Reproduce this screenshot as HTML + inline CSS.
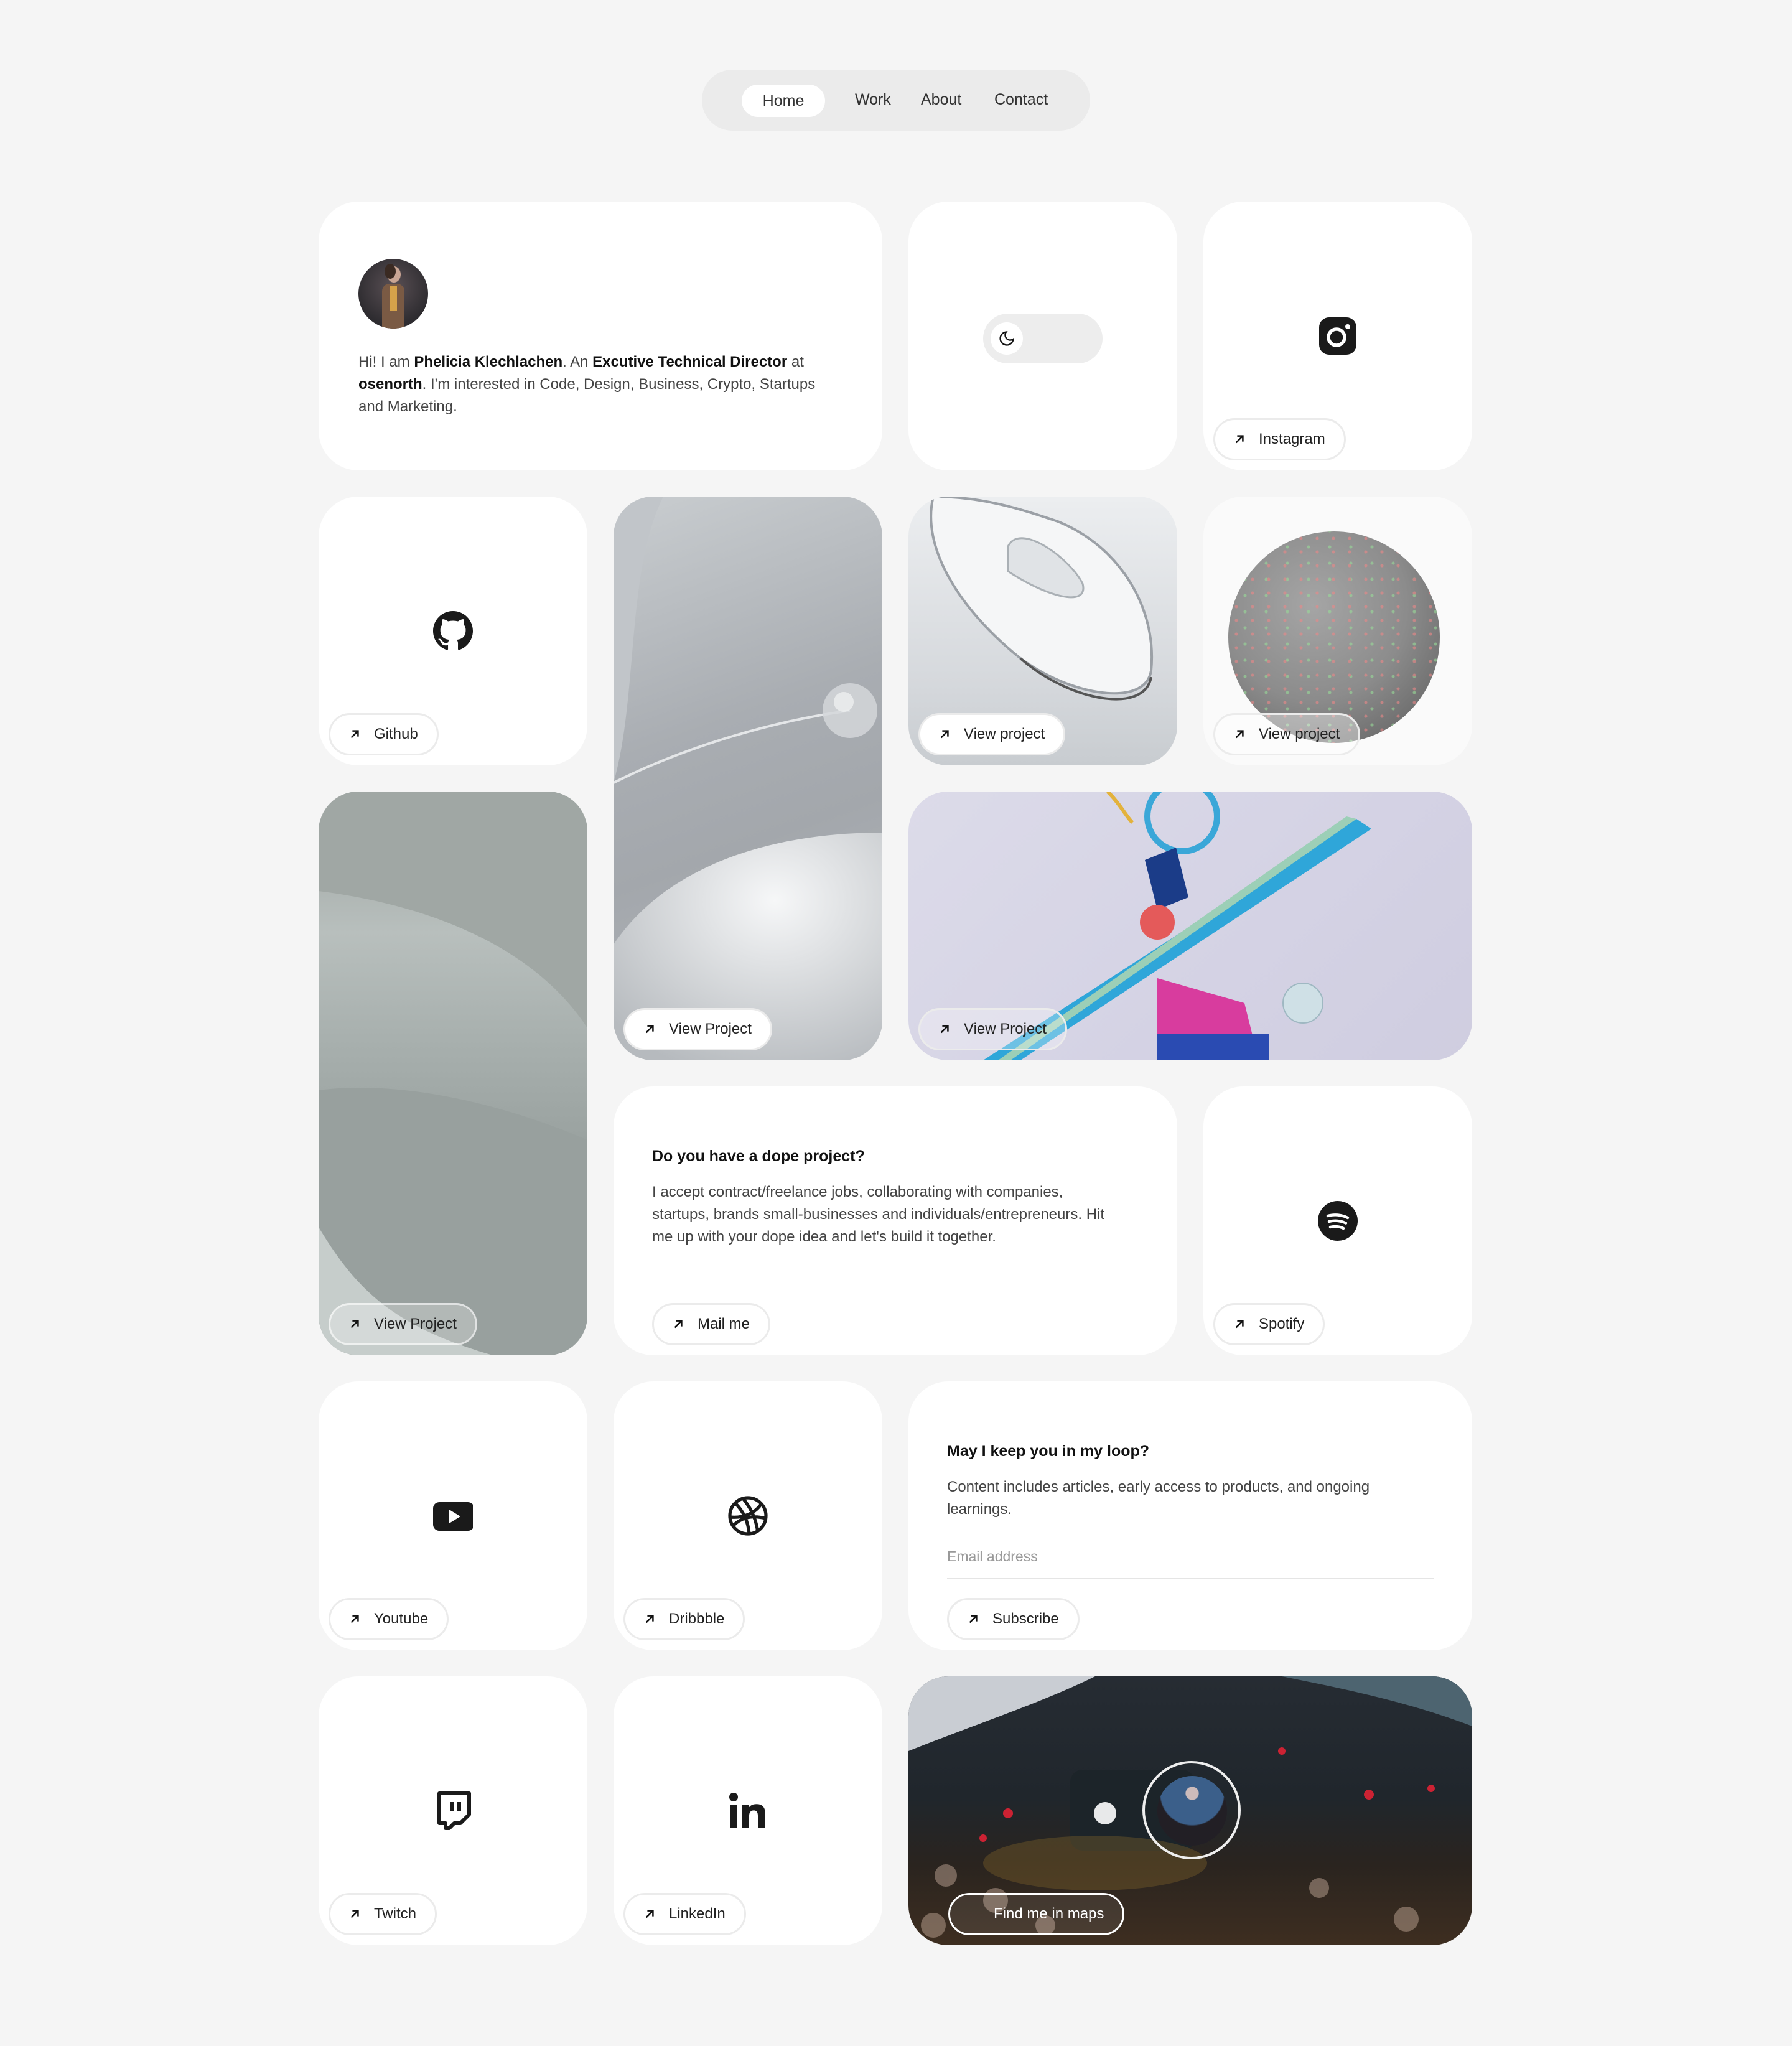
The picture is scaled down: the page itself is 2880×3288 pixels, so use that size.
<!DOCTYPE html>
<html><head><meta charset="utf-8">
<style>
html{zoom:2}
*{box-sizing:border-box;margin:0;padding:0}
body{width:1440px;height:1644px;background:#f5f5f5;font-family:"Liberation Sans",sans-serif;color:#111;position:relative;overflow:hidden}
.nav{position:absolute;left:564px;top:56px;width:312px;height:49px;background:#ebebeb;border-radius:25px}
.nav span{position:absolute;top:17px;font-size:12.5px;color:#333}
.nav .home{position:absolute;left:32px;top:12px;width:67px;height:26px;background:#fff;border-radius:13px;text-align:center;line-height:26px;color:#333;font-size:12.5px}
.card{position:absolute;width:216px;height:216px;background:#fff;border-radius:32px;overflow:hidden}
.c1{left:256px}.c2{left:493px}.c3{left:730px}.c4{left:967px}
.r1{top:162px}.r2{top:399px}.r3{top:636px}.r4{top:873px}.r5{top:1110px}.r6{top:1347px}
.w2{width:453px}.h2{height:453px}
.btn{position:absolute;left:8px;bottom:8px;height:34px;border:1.5px solid #ebebeb;border-radius:17px;background:#fff;font-size:12px;line-height:31px;padding:0 15px 0 35px;color:#222;white-space:nowrap}
.btn svg{position:absolute;left:15px;top:11px}
.btn.tr{background:rgba(255,255,255,.08);border-color:rgba(255,255,255,.55)}
.ico{position:absolute;left:92px;top:92px;width:32px;height:32px}
.txt{font-size:12px;line-height:18px;color:#444}
.txt b{font-weight:600;color:#111}
</style></head><body>
<div class="nav"><div class="home">Home</div><span style="left:123px">Work</span><span style="left:176px">About</span><span style="left:235px">Contact</span></div>

<div class="card c1 r1 w2">
 <div style="position:absolute;left:32px;top:46px;width:56px;height:56px;border-radius:50%;background:radial-gradient(circle at 50% 40%,#5a5055,#2e2c30 70%);overflow:hidden">
  <div style="position:absolute;left:23px;top:6px;width:11px;height:13px;border-radius:50%;background:#c9a594"></div>
  <div style="position:absolute;left:21px;top:4px;width:9px;height:12px;border-radius:50%;background:#3a2a22"></div>
  <div style="position:absolute;left:19px;top:20px;width:18px;height:36px;border-radius:6px 6px 0 0;background:#7a5a44"></div>
  <div style="position:absolute;left:25px;top:22px;width:6px;height:20px;background:#d6a24a"></div>
 </div>
 <p class="txt" style="position:absolute;left:32px;top:120px;width:380px">Hi! I am <b>Phelicia Klechlachen</b>. An <b>Excutive Technical Director</b> at <b>osenorth</b>. I'm interested in Code, Design, Business, Crypto, Startups and Marketing.</p>
</div>
<div class="card c3 r1"><div style="position:absolute;left:60px;top:90px;width:96px;height:40px;border-radius:20px;background:#ededed"><div style="position:absolute;left:6px;top:7px;width:26px;height:26px;border-radius:50%;background:#fff"></div><svg style="position:absolute;left:12px;top:13px" width="14" height="14" viewBox="0 0 24 24" fill="none" stroke="#111" stroke-width="2"><path d="M21 12.8A9 9 0 1 1 11.2 3a7 7 0 0 0 9.8 9.8z"/></svg></div></div>
<div class="card c4 r1"><svg class="ico" viewBox="0 0 32 32"><rect x="1" y="1" width="30" height="30" rx="8" fill="#1a1a1a"/><circle cx="15" cy="17" r="6.5" fill="none" stroke="#fff" stroke-width="2.8"/><circle cx="24" cy="8.5" r="2" fill="#fff"/></svg>
<div class="btn"><svg width="9" height="9" viewBox="0 0 10 10" fill="none" stroke="#111" stroke-width="1.4"><path d="M2 8L8 2M3 2h5v5"/></svg>Instagram</div></div>

<div class="card c1 r2"><svg class="ico" viewBox="0 0 16 16"><path fill="#1a1a1a" d="M8 0C3.58 0 0 3.58 0 8c0 3.54 2.29 6.530 5.47 7.59.4.07.55-.17.55-.38 0-.19-.01-.82-.01-1.49-2.01.37-2.53-.49-2.690-.94-.09-.23-.48-.94-.82-1.13-.28-.15-.68-.52-.01-.53.63-.01 1.08.58 1.23.82.72 1.21 1.87.87 2.33.66.07-.52.28-.87.51-1.07-1.78-.2-3.64-.89-3.64-3.95 0-.87.31-1.59.82-2.15-.08-.2-.36-1.02.08-2.12 0 0 .67-.21 2.2.82.64-.18 1.32-.27 2-.27.68 0 1.36.09 2 .27 1.53-1.04 2.2-.82 2.2-.82.44 1.1.16 1.92.08 2.12.51.56.82 1.27.82 2.15 0 3.07-1.87 3.75-3.65 3.95.29.25.54.73.54 1.48 0 1.070-.01 1.93-.01 2.2 0 .21.15.46.55.38A8.013 8.013 0 0016 8c0-4.42-3.58-8-8-8z"/></svg>
<div class="btn"><svg width="9" height="9" viewBox="0 0 10 10" fill="none" stroke="#111" stroke-width="1.4"><path d="M2 8L8 2M3 2h5v5"/></svg>Github</div></div>

<div class="card c2 r2 h2" style="background:linear-gradient(160deg,#c9cdd0 0%,#a9adb2 40%,#a3a7ac 60%,#b8bcc0 100%)">
 <svg width="216" height="453" style="position:absolute;left:0;top:0"><defs><radialGradient id="g1" cx="0.6" cy="0.3" r="0.8"><stop offset="0" stop-color="#f6f7f8"/><stop offset="1" stop-color="#b6babe"/></radialGradient></defs>
 <path d="M0 360 C40 300 120 270 216 270 V453 H0Z" fill="url(#g1)"/>
 <path d="M0 230 C60 200 130 180 190 172" stroke="#e4e6e8" stroke-width="2" fill="none"/>
 <circle cx="190" cy="172" r="22" fill="#d3d6d9" opacity=".85"/><circle cx="185" cy="165" r="8" fill="#f2f3f4" opacity=".7"/>
 <path d="M40 0 C10 60 20 160 0 230 V0Z" fill="#c1c5c9"/></svg>
 <div class="btn"><svg width="9" height="9" viewBox="0 0 10 10" fill="none" stroke="#111" stroke-width="1.4"><path d="M2 8L8 2M3 2h5v5"/></svg>View Project</div></div>

<div class="card c3 r2" style="background:linear-gradient(180deg,#eceef0,#d5d8dc 70%,#c8ccd0)">
 <svg width="216" height="216" style="position:absolute;left:0;top:0"><path d="M20 0 C10 40 40 90 90 130 C130 160 190 170 195 140 C200 90 170 40 120 20 C90 10 60 0 20 0Z" fill="#f5f6f7" stroke="#9ba0a6" stroke-width="2"/><path d="M80 40 C90 20 130 50 140 70 C145 90 110 80 80 60Z" fill="#e0e3e6" stroke="#aab0b5" stroke-width="1.5"/><path d="M90 130 C130 165 190 175 195 145" stroke="#555" stroke-width="2" fill="none"/></svg>
 <div class="btn"><svg width="9" height="9" viewBox="0 0 10 10" fill="none" stroke="#111" stroke-width="1.4"><path d="M2 8L8 2M3 2h5v5"/></svg>View project</div></div>

<div class="card c4 r2" style="background:#fafafa">
 <div style="position:absolute;left:20px;top:28px;width:170px;height:170px;border-radius:50%;background:radial-gradient(circle at 40% 35%,#a5a5a5,#8c8c8c 50%,#6e6e6e 80%);"></div>
 <div style="position:absolute;left:20px;top:28px;width:170px;height:170px;border-radius:50%;background:radial-gradient(circle,#e88 1px,transparent 1.5px) 0 0/13px 11px,radial-gradient(circle,#9d9 1px,transparent 1.5px) 5px 6px/17px 13px;opacity:.6"></div>
 <div class="btn" style="background:rgba(255,255,255,.4)"><svg width="9" height="9" viewBox="0 0 10 10" fill="none" stroke="#111" stroke-width="1.4"><path d="M2 8L8 2M3 2h5v5"/></svg>View project</div></div>

<div class="card c1 r3 h2" style="background:linear-gradient(180deg,#9aa19e 0%,#b8bfbd 25%,#a7afad 45%,#949c9a 70%,#a9b0ae 100%)">
 <svg width="216" height="453" style="position:absolute;left:0;top:0"><path d="M0 80 C80 90 170 120 216 190 V0 H0Z" fill="#a0a7a4"/><path d="M0 240 C80 230 170 260 216 280 V453 H0Z" fill="#98a09e"/><path d="M0 350 C30 400 60 430 140 453 H0Z" fill="#c6cdcb"/></svg>
 <div class="btn" style="background:rgba(255,255,255,.25);border-color:rgba(255,255,255,.6)"><svg width="9" height="9" viewBox="0 0 10 10" fill="none" stroke="#111" stroke-width="1.4"><path d="M2 8L8 2M3 2h5v5"/></svg>View Project</div></div>

<div class="card c3 r3 w2" style="background:linear-gradient(135deg,#dcdbe9,#d4d2e4 60%,#cfcde0)">
 <svg width="453" height="216" style="position:absolute;left:0;top:0">
 <path d="M60 216 L360 22 L372 30 L90 216Z" fill="#2fa6d9"/><path d="M72 216 L352 20 L360 22 L82 216Z" fill="#9ccfb7"/>
 <circle cx="220" cy="20" r="28" fill="none" stroke="#3aa7d8" stroke-width="5"/><path d="M160 0 C170 10 175 20 180 25" stroke="#e3b23c" stroke-width="3" fill="none"/>
 <path d="M190 55 L215 45 L225 85 L200 95Z" fill="#1b3c88"/><circle cx="200" cy="105" r="14" fill="#e45a5a"/>
 <path d="M200 150 L270 170 L280 210 L200 200Z" fill="#d83c9e"/><rect x="200" y="195" width="90" height="21" fill="#2a4bb2"/>
 <circle cx="317" cy="170" r="16" fill="#cfe0e6" stroke="#9fb8c2"/></svg>
 <div class="btn" style="background:rgba(255,255,255,.3)"><svg width="9" height="9" viewBox="0 0 10 10" fill="none" stroke="#111" stroke-width="1.4"><path d="M2 8L8 2M3 2h5v5"/></svg>View Project</div></div>

<div class="card c2 r4 w2">
 <div style="position:absolute;left:31px;top:49px;font-size:12.5px;font-weight:bold;color:#111">Do you have a dope project?</div>
 <p class="txt" style="position:absolute;left:31px;top:76px;width:375px">I accept contract/freelance jobs, collaborating with companies, startups, brands small-businesses and individuals/entrepreneurs. Hit me up with your dope idea and let's build it together.</p>
 <div class="btn" style="left:31px"><svg width="9" height="9" viewBox="0 0 10 10" fill="none" stroke="#111" stroke-width="1.4"><path d="M2 8L8 2M3 2h5v5"/></svg>Mail me</div></div>

<div class="card c4 r4"><svg class="ico" viewBox="0 0 32 32"><circle cx="16" cy="16" r="16" fill="#1a1a1a"/><path d="M8 12c5-1.5 11-1 16 1.5M9 16.5c4.5-1.2 9.5-.7 13.5 1.3M10 21c3.5-.9 7.5-.5 10.5 1" stroke="#fff" stroke-width="2.2" fill="none" stroke-linecap="round"/></svg>
<div class="btn"><svg width="9" height="9" viewBox="0 0 10 10" fill="none" stroke="#111" stroke-width="1.4"><path d="M2 8L8 2M3 2h5v5"/></svg>Spotify</div></div>

<div class="card c1 r5"><svg class="ico" viewBox="0 0 32 32"><rect x="0" y="5" width="33" height="23" rx="5" fill="#1a1a1a"/><path d="M13 11v11l9-5.5z" fill="#fff"/></svg>
<div class="btn"><svg width="9" height="9" viewBox="0 0 10 10" fill="none" stroke="#111" stroke-width="1.4"><path d="M2 8L8 2M3 2h5v5"/></svg>Youtube</div></div>
<div class="card c2 r5"><svg class="ico" viewBox="0 0 32 32" fill="none" stroke="#1a1a1a" stroke-width="2.6"><circle cx="16" cy="16" r="14.5"/><path d="M6 6c6 6 10 14 11 24M2 17c10 1 20-3 25-11M12 2c4 5 10 13 12 27M4 24c6-6 14-9 26-6"/></svg>
<div class="btn"><svg width="9" height="9" viewBox="0 0 10 10" fill="none" stroke="#111" stroke-width="1.4"><path d="M2 8L8 2M3 2h5v5"/></svg>Dribbble</div></div>
<div class="card c3 r5 w2">
 <div style="position:absolute;left:31px;top:49px;font-size:12.5px;font-weight:bold;color:#111">May I keep you in my loop?</div>
 <p class="txt" style="position:absolute;left:31px;top:76px;width:360px">Content includes articles, early access to products, and ongoing learnings.</p>
 <div style="position:absolute;left:31px;top:134px;font-size:11.5px;color:#999">Email address</div>
 <div style="position:absolute;left:31px;top:158px;width:391px;height:1px;background:#e5e5e5"></div>
 <div class="btn" style="left:31px"><svg width="9" height="9" viewBox="0 0 10 10" fill="none" stroke="#111" stroke-width="1.4"><path d="M2 8L8 2M3 2h5v5"/></svg>Subscribe</div></div>

<div class="card c1 r6"><svg class="ico" viewBox="0 0 32 32"><path d="M5 2h24v17l-7 7h-5l-4 4h-3v-4H5z" fill="none" stroke="#1a1a1a" stroke-width="3" stroke-linejoin="round"/><path d="M15 9v7M21 9v7" stroke="#1a1a1a" stroke-width="3"/></svg>
<div class="btn"><svg width="9" height="9" viewBox="0 0 10 10" fill="none" stroke="#111" stroke-width="1.4"><path d="M2 8L8 2M3 2h5v5"/></svg>Twitch</div></div>
<div class="card c2 r6"><svg class="ico" viewBox="0 0 32 32"><circle cx="4.5" cy="5" r="3.5" fill="#1a1a1a"/><rect x="1.5" y="11" width="6" height="19" fill="#1a1a1a"/><path d="M11 11h5.6v2.7C18 11.5 20 10.6 23 10.6c5 0 7 3 7 8V30h-6V20c0-2.5-.8-4.3-3.3-4.3S17 17.5 17 20v10h-6z" fill="#1a1a1a"/></svg>
<div class="btn"><svg width="9" height="9" viewBox="0 0 10 10" fill="none" stroke="#111" stroke-width="1.4"><path d="M2 8L8 2M3 2h5v5"/></svg>LinkedIn</div></div>
<div class="card c3 r6 w2" style="background:linear-gradient(180deg,#262c33 0%,#20262c 45%,#2a241f 70%,#3e2e20 100%)">
 <svg width="453" height="216" style="position:absolute;left:0;top:0">
 <path d="M0 0 H150 C110 20 50 40 0 60Z" fill="#c9cdd3"/><path d="M300 0 H453 V40 C400 20 350 10 300 0Z" fill="#4d6470"/>
 <rect x="130" y="75" width="100" height="65" rx="10" fill="#1c2429"/><circle cx="158" cy="110" r="9" fill="#fff" opacity=".9"/>
 <ellipse cx="150" cy="150" rx="90" ry="22" fill="#8a6a2a" opacity=".35"/>
 <g fill="#cdb2a0" opacity=".45"><circle cx="30" cy="160" r="9"/><circle cx="70" cy="180" r="10"/><circle cx="330" cy="170" r="8"/><circle cx="400" cy="195" r="10"/><circle cx="110" cy="200" r="8"/><circle cx="20" cy="200" r="10"/></g>
 <g fill="#c23"><circle cx="80" cy="110" r="4"/><circle cx="60" cy="130" r="3"/><circle cx="300" cy="60" r="3"/><circle cx="420" cy="90" r="3"/><circle cx="370" cy="95" r="4"/></g></svg>
 <div style="position:absolute;left:188px;top:68px;width:79px;height:79px;border-radius:50%;border:2px solid #eee"></div>
 <div style="position:absolute;left:200px;top:80px;width:56px;height:56px;border-radius:50%;background:radial-gradient(circle at 50% 25%,#cbb 0 10%,#3b5f8a 11% 50%,#221f25 52%)"></div>
 <div class="btn tr" style="left:32px;color:#fff;border-color:#fff">Find me in maps</div></div>
</body></html>
